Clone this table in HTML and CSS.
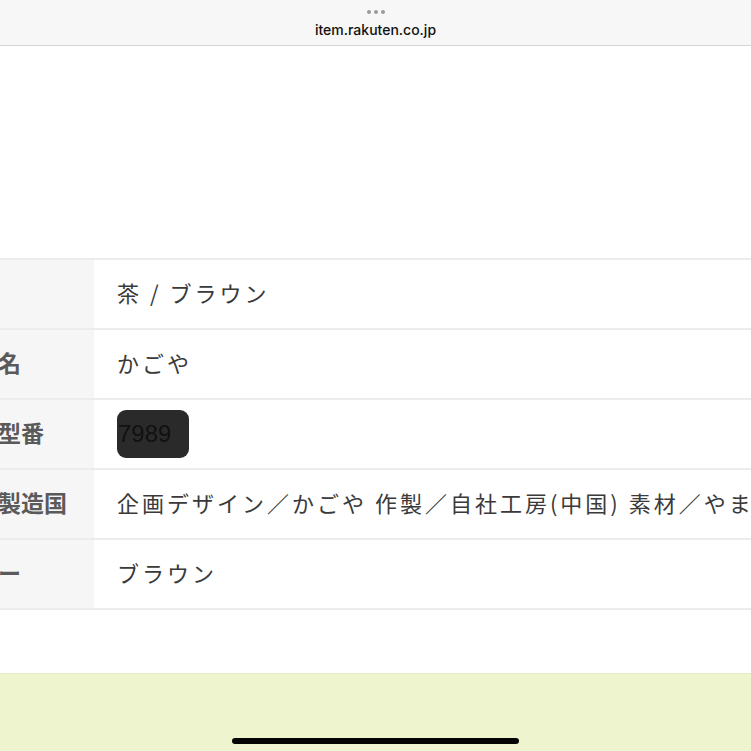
FILE: index.html
```html
<!DOCTYPE html>
<html lang="ja">
<head>
    <meta charset="UTF-8">
    <meta name="viewport" content="width=device-width, initial-scale=1.0">
    <title>item.rakuten.co.jp</title>
    <link rel="stylesheet" href="styles.css">
</head>
<body>
    <div class="topbar">
        <div class="dots"><span></span><span></span><span></span></div>
        <div class="url">item.rakuten.co.jp</div>
    </div>

    <div class="spec">
        <div class="row">
            <div class="label">色</div>
            <div class="value">茶 / ブラウン</div>
        </div>
        <div class="row">
            <div class="label">ブランド名</div>
            <div class="value">かごや</div>
        </div>
        <div class="row">
            <div class="label">メーカー型番</div>
            <div class="value"><span class="masked">7989</span></div>
        </div>
        <div class="row">
            <div class="label">原産国・製造国</div>
            <div class="value">企画デザイン／かごや 作製／自社工房(中国) 素材／やまぶどう</div>
        </div>
        <div class="row">
            <div class="label">本体カラー</div>
            <div class="value">ブラウン</div>
        </div>
    </div>

    <div class="bottom">
        <div class="home"></div>
    </div>
</body>
</html>
```

FILE: styles.css
```css
body {
    margin: 0;
    padding: 0;
    width: 751px;
    height: 751px;
    overflow: hidden;
    background: #ffffff;
    font-family: "Noto Sans CJK JP", "Noto Sans", sans-serif;
}
.topbar {
    height: 45px;
    background: #f7f7f7;
    border-bottom: 1px solid #d6d6d6;
    display: flex;
    flex-direction: column;
    align-items: center;
}
.dots {
    display: flex;
    gap: 3px;
    margin-top: 10px;
}
.dots span {
    width: 4px;
    height: 4px;
    border-radius: 50%;
    background: #9a9a9a;
}
.url {
    margin-top: 7px;
    font-family: Inter, "Liberation Sans", sans-serif;
    font-size: 14px;
    font-weight: 500;
    color: #111;
}
.spec {
    margin-top: 212px;
    margin-left: -110px;
    border-bottom: 2px solid #ececec;
}
.row {
    display: grid;
    grid-template-columns: 204px 1fr;
    height: 68px;
    border-top: 2px solid #ececec;
}
.label {
    background: #f6f6f6;
    padding-left: 16px;
    padding-bottom: 4px;
    display: flex;
    align-items: center;
    font-size: 23px;
    font-weight: bold;
    color: #5a5a5a;
    white-space: nowrap;
    overflow: hidden;
}
.value {
    padding-left: 23px;
    padding-bottom: 4px;
    display: flex;
    align-items: center;
    font-size: 22px;
    color: #3a3a3a;
    white-space: nowrap;
    letter-spacing: 3px;
}
.masked {
    display: inline-block;
    background: #2a2a2a;
    color: #111;
    font-family: "Liberation Sans", sans-serif;
    font-size: 24px;
    letter-spacing: 0;
    padding: 10px 18px 10px 1px;
    margin-top: 4px;
    border-radius: 9px;
    line-height: 28px;
    filter: blur(0.7px);
}
.bottom {
    margin-top: 63px;
    height: 78px;
    background: #eef4cd;
    border-top: 1px solid #e5ebc6;
    display: flex;
    justify-content: center;
    align-items: flex-end;
}
.home {
    width: 287px;
    height: 6px;
    border-radius: 3px;
    background: #050505;
    margin-bottom: 8px;
}
```
